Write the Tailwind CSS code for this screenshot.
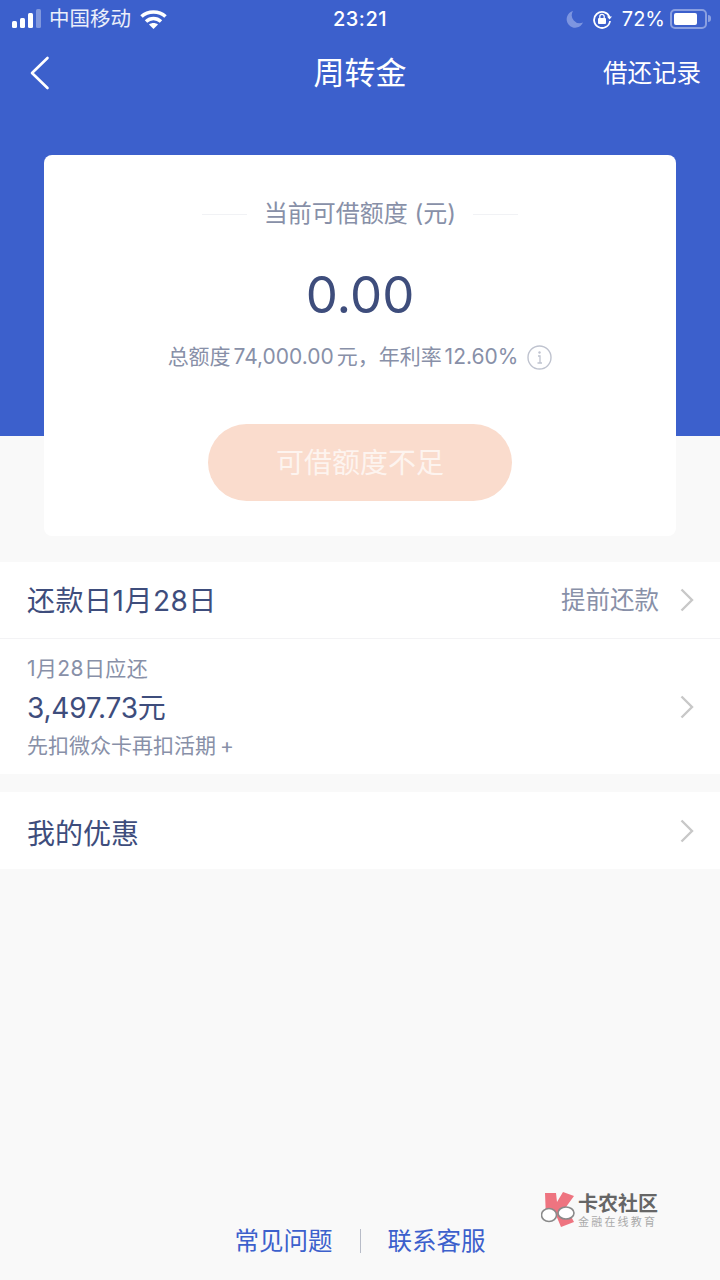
<!DOCTYPE html>
<html lang="zh-CN">
<head>
    <meta charset="UTF-8">
    <meta name="viewport" content="width=device-width, initial-scale=1.0">
    <title>周转金</title>
    <script src="https://cdn.jsdelivr.net/npm/@tailwindcss/browser@4"></script>
</head>
<body class="m-0 bg-[#f9f9f9] font-['Inter','Noto_Sans_CJK_SC',sans-serif]">
<div class="relative w-[720px] h-[1280px] overflow-hidden flex flex-col">
    <!-- blue backdrop behind the card -->
    <div class="absolute top-0 left-0 w-full h-[436px] bg-[#3c60cc]"></div>

    <!-- Status bar -->
    <div class="relative h-[37px] flex items-center justify-between px-3 text-white">
        <div class="flex items-center w-[237px]">
            <svg width="30" height="20" viewBox="0 0 30 20" fill="#fff">
                <rect x="0" y="12" width="5" height="7" rx="1.500"/>
                <rect x="8" y="9" width="5" height="10" rx="1.500"/>
                <rect x="16" y="4" width="5" height="15" rx="1.500"/>
                <rect x="24" y="0" width="5" height="19" rx="1.500" fill-opacity=".35"/>
            </svg>
            <span class="ml-[7px] text-[20.500px] leading-[37px] text-white/90">中国移动</span>
            <svg class="ml-[9px]" width="27" height="20" viewBox="0 0 27 20" fill="none" stroke="#fff" stroke-width="3.600">
                <path d="M1.500 7.500C8 1.500 19 1.500 25.500 7.500"/>
                <path d="M6 12.500C10.500 8.500 16.500 8.500 21 12.500"/>
                <path d="M13.500 20l-4.500-4.500c2.500-2 6.500-2 9 0z" fill="#fff" stroke="none"/>
            </svg>
        </div>
        <span class="text-[20px] font-medium tracking-[0.5px]">23:21</span>
        <div class="flex items-center justify-end w-[240px] mr-[-3px]">
            <svg width="18" height="18" viewBox="0 0 18 18" fill="#7d95e0"><path d="M7 1a8.500 8.500 0 1 0 10 11.500A8 8 0 0 1 7 1z"/></svg>
            <svg class="ml-[8px]" width="20" height="20" viewBox="0 0 20 20" fill="none">
                <path d="M17.500 8A8 8 0 1 0 18 12" stroke="#fff" stroke-width="1.800"/>
                <path d="M15 7.500h5l-2.500 3z" fill="#fff"/>
                <rect x="6" y="9" width="8" height="6" rx="1" fill="#fff"/>
                <path d="M7.800 9V7.500a2.200 2.200 0 0 1 4.400 0V9" stroke="#fff" stroke-width="1.300"/>
            </svg>
            <span class="ml-[10px] text-[20px]">72%</span>
            <div class="ml-[5px] w-[37px] h-[20px] rounded-[5px] border-2 border-white/40 p-[2px] flex">
                <div class="w-[23px] h-full rounded-[2px] bg-white"></div>
            </div>
            <div class="w-[3px] h-[7px] ml-[1px] rounded-r-full bg-white/40"></div>
        </div>
    </div>

    <!-- Nav -->
    <div class="relative h-[72px] flex items-center justify-between text-white">
        <svg class="ml-[30px]" width="20" height="34" viewBox="0 0 20 34" fill="none" stroke="#fff" stroke-width="2.600" stroke-linecap="round" stroke-linejoin="round">
            <path d="M17.500 2L2 17l15.500 15"/>
        </svg>
        <h1 class="absolute left-0 right-0 text-center text-[31px] font-normal leading-[72px]">周转金</h1>
        <span class="mr-[19px] text-[24.500px]">借还记录</span>
    </div>

    <!-- Card -->
    <div class="relative mt-[46px] mx-[44px] h-[381px] rounded-[8px] bg-white flex flex-col items-center">
        <div class="mt-[44px] flex items-center gap-[17px]">
            <div class="w-[45px] h-px bg-[#f1f2f5]"></div>
            <span class="text-[24px] leading-[30px] text-[#8890a8]">当前可借额度 (元)</span>
            <div class="w-[45px] h-px bg-[#f1f2f5]"></div>
        </div>
        <div class="mt-[36px] text-[51px] leading-[60px] text-[#3e4d7c]">0.00</div>
        <div class="mt-[18px] flex items-center text-[21px] leading-[28px] text-[#8890a8]">
            <span class="[word-spacing:-3px]">总额度 74,000.00 元，年利率 12.60%</span>
            <svg class="ml-[9px]" width="25" height="25" viewBox="0 0 25 25" fill="none">
                <circle cx="12.500" cy="12.500" r="11.500" stroke="#bfc3cf" stroke-width="1.400"/>
                <circle cx="12.500" cy="7.500" r="1.200" fill="#bfc3cf"/>
                <path d="M11 11h2v7M10.500 18h4.500" stroke="#bfc3cf" stroke-width="1.300"/>
            </svg>
        </div>
        <div class="mt-[53px] w-[304px] h-[77px] rounded-full bg-[#fadccd] flex items-center justify-center text-[28px] text-white/70">可借额度不足</div>
    </div>

    <!-- Repayment section -->
    <div class="relative mt-[26px] bg-white">
        <div class="h-[77px] flex items-center justify-between pl-[27px] pr-[26px] border-b border-[#f3f3f5]">
            <span class="mt-[1px] text-[28px] tracking-[0.5px] text-[#3e4d7c]">还款日1月28日</span>
            <div class="flex items-center gap-[21px]">
                <span class="text-[24.500px] text-[#8890a8]">提前还款</span>
                <svg width="14" height="24" viewBox="0 0 14 24" fill="none" stroke="#c8c8c8" stroke-width="2.400"><path d="M1.500 1.500L12 12 1.500 22.500"/></svg>
            </div>
        </div>
        <div class="h-[135px] flex items-center justify-between pl-[27px] pr-[26px]">
            <div class="flex flex-col">
                <span class="mt-[1px] text-[21px] leading-[30px] tracking-[0.4px] text-[#8890a8]">1月28日应还</span>
                <span class="mt-[5px] text-[28px] leading-[38px] tracking-[-0.2px] text-[#3e4d7c]">3,497.73元</span>
                <span class="mt-[4px] text-[21px] leading-[30px] [word-spacing:-2px] text-[#8890a8]">先扣微众卡再扣活期 +</span>
            </div>
            <svg width="14" height="24" viewBox="0 0 14 24" fill="none" stroke="#c8c8c8" stroke-width="2.400"><path d="M1.500 1.500L12 12 1.500 22.500"/></svg>
        </div>
    </div>

    <!-- Coupons -->
    <div class="relative mt-[18px] h-[77px] bg-white flex items-center justify-between pl-[27px] pr-[26px]">
        <span class="mt-[7px] text-[28px] text-[#3e4d7c]">我的优惠</span>
        <svg width="14" height="24" viewBox="0 0 14 24" fill="none" stroke="#c8c8c8" stroke-width="2.400"><path d="M1.500 1.500L12 12 1.500 22.500"/></svg>
    </div>

    <!-- Footer links -->
    <div class="relative mt-auto mb-[19px] flex items-center justify-center text-[24.500px] leading-[40px] text-[#3c60cc]">
        <span>常见问题</span>
        <div class="mx-[27px] w-px h-[24px] bg-[#b8bcc8]"></div>
        <span>联系客服</span>
    </div>

    <!-- Watermark -->
    <div class="absolute left-[541px] top-[1192px] flex items-start">
        <svg width="36" height="37" viewBox="0 0 36 37">
            <path d="M4 1h11l1 9 6-10 11 4-8 11 8 15-13 5-5-12-1 4H5z" fill="#ee7480"/>
            <ellipse cx="8" cy="23" rx="7.500" ry="6.500" fill="#fff" stroke="#8a8a8a" stroke-width="1.600"/>
            <ellipse cx="25" cy="21" rx="8" ry="6" fill="#fff" stroke="#8a8a8a" stroke-width="1.600"/>
        </svg>
        <div class="ml-[1px] mt-[2px] flex flex-col">
            <span class="text-[20px] leading-[21px] font-bold text-[#666]">卡农社区</span>
            <span class="text-[11px] leading-[14px] tracking-[2.200px] text-[#aaa]">金融在线教育</span>
        </div>
    </div>
</div>
</body>
</html>
